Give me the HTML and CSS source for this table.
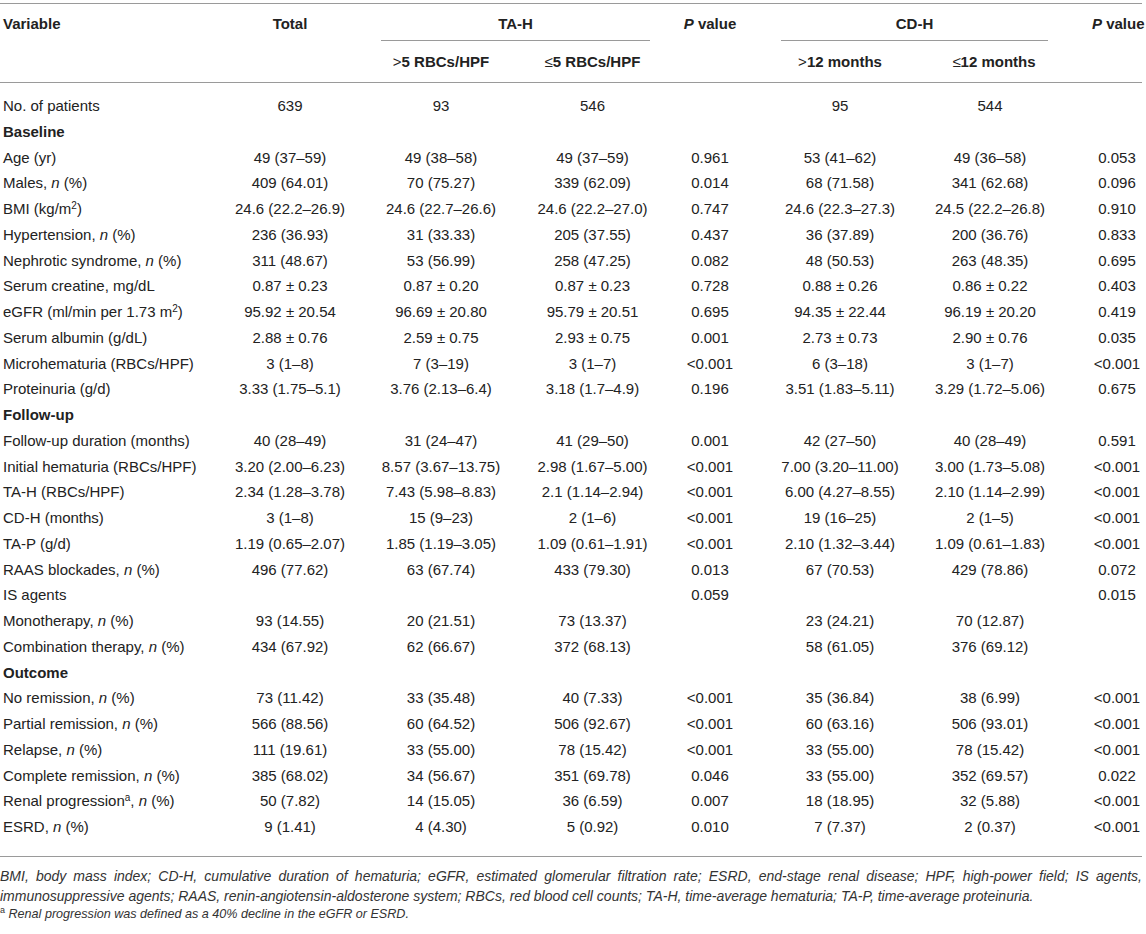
FILE: index.html
```html
<!DOCTYPE html>
<html lang="en">
<head>
    <meta charset="UTF-8">
    <meta name="viewport" content="width=device-width, initial-scale=1.0">
    <title>Patient characteristics by hematuria</title>
    <link rel="stylesheet" href="styles.css">
</head>
<body>
    <div class="page">
        <table class="data">
            <colgroup>
                <col class="c-var">
                <col class="c-total">
                <col class="c-ta1">
                <col class="c-ta2">
                <col class="c-p1">
                <col class="c-cd1">
                <col class="c-cd2">
                <col class="c-p2">
            </colgroup>
            <thead>
                <tr class="head-top">
                    <th rowspan="2" class="h-var">Variable</th>
                    <th rowspan="2">Total</th>
                    <th colspan="2" class="h-group"><div class="group ta">TA-H</div></th>
                    <th rowspan="2"><i>P</i> value</th>
                    <th colspan="2" class="h-group"><div class="group cd">CD-H</div></th>
                    <th rowspan="2" class="h-p2"><i>P</i> value</th>
                </tr>
                <tr class="head-sub">
                    <th><span class="op">&gt;</span>5 RBCs/HPF</th>
                    <th><span class="op">&le;</span>5 RBCs/HPF</th>
                    <th><span class="op">&gt;</span>12 months</th>
                    <th class="h-cd2"><span class="op">&le;</span>12 months</th>
                </tr>
            </thead>
            <tbody>
                <tr class="first">
                    <td>No. of patients</td><td>639</td><td>93</td><td>546</td><td></td><td>95</td><td>544</td><td></td>
                </tr>
                <tr class="section"><td colspan="8">Baseline</td></tr>
                <tr>
                    <td>Age (yr)</td><td>49 (37–59)</td><td>49 (38–58)</td><td>49 (37–59)</td><td>0.961</td><td>53 (41–62)</td><td>49 (36–58)</td><td>0.053</td>
                </tr>
                <tr>
                    <td>Males, <i>n</i> (%)</td><td>409 (64.01)</td><td>70 (75.27)</td><td>339 (62.09)</td><td>0.014</td><td>68 (71.58)</td><td>341 (62.68)</td><td>0.096</td>
                </tr>
                <tr>
                    <td>BMI (kg/m<sup>2</sup>)</td><td>24.6 (22.2–26.9)</td><td>24.6 (22.7–26.6)</td><td>24.6 (22.2–27.0)</td><td>0.747</td><td>24.6 (22.3–27.3)</td><td>24.5 (22.2–26.8)</td><td>0.910</td>
                </tr>
                <tr>
                    <td>Hypertension, <i>n</i> (%)</td><td>236 (36.93)</td><td>31 (33.33)</td><td>205 (37.55)</td><td>0.437</td><td>36 (37.89)</td><td>200 (36.76)</td><td>0.833</td>
                </tr>
                <tr>
                    <td>Nephrotic syndrome, <i>n</i> (%)</td><td>311 (48.67)</td><td>53 (56.99)</td><td>258 (47.25)</td><td>0.082</td><td>48 (50.53)</td><td>263 (48.35)</td><td>0.695</td>
                </tr>
                <tr>
                    <td>Serum creatine, mg/dL</td><td>0.87 ± 0.23</td><td>0.87 ± 0.20</td><td>0.87 ± 0.23</td><td>0.728</td><td>0.88 ± 0.26</td><td>0.86 ± 0.22</td><td>0.403</td>
                </tr>
                <tr>
                    <td>eGFR (ml/min per 1.73 m<sup>2</sup>)</td><td>95.92 ± 20.54</td><td>96.69 ± 20.80</td><td>95.79 ± 20.51</td><td>0.695</td><td>94.35 ± 22.44</td><td>96.19 ± 20.20</td><td>0.419</td>
                </tr>
                <tr>
                    <td>Serum albumin (g/dL)</td><td>2.88 ± 0.76</td><td>2.59 ± 0.75</td><td>2.93 ± 0.75</td><td>0.001</td><td>2.73 ± 0.73</td><td>2.90 ± 0.76</td><td>0.035</td>
                </tr>
                <tr>
                    <td>Microhematuria (RBCs/HPF)</td><td>3 (1–8)</td><td>7 (3–19)</td><td>3 (1–7)</td><td>&lt;0.001</td><td>6 (3–18)</td><td>3 (1–7)</td><td>&lt;0.001</td>
                </tr>
                <tr>
                    <td>Proteinuria (g/d)</td><td>3.33 (1.75–5.1)</td><td>3.76 (2.13–6.4)</td><td>3.18 (1.7–4.9)</td><td>0.196</td><td>3.51 (1.83–5.11)</td><td>3.29 (1.72–5.06)</td><td>0.675</td>
                </tr>
                <tr class="section"><td colspan="8">Follow-up</td></tr>
                <tr>
                    <td>Follow-up duration (months)</td><td>40 (28–49)</td><td>31 (24–47)</td><td>41 (29–50)</td><td>0.001</td><td>42 (27–50)</td><td>40 (28–49)</td><td>0.591</td>
                </tr>
                <tr>
                    <td>Initial hematuria (RBCs/HPF)</td><td>3.20 (2.00–6.23)</td><td>8.57 (3.67–13.75)</td><td>2.98 (1.67–5.00)</td><td>&lt;0.001</td><td>7.00 (3.20–11.00)</td><td>3.00 (1.73–5.08)</td><td>&lt;0.001</td>
                </tr>
                <tr>
                    <td>TA-H (RBCs/HPF)</td><td>2.34 (1.28–3.78)</td><td>7.43 (5.98–8.83)</td><td>2.1 (1.14–2.94)</td><td>&lt;0.001</td><td>6.00 (4.27–8.55)</td><td>2.10 (1.14–2.99)</td><td>&lt;0.001</td>
                </tr>
                <tr>
                    <td>CD-H (months)</td><td>3 (1–8)</td><td>15 (9–23)</td><td>2 (1–6)</td><td>&lt;0.001</td><td>19 (16–25)</td><td>2 (1–5)</td><td>&lt;0.001</td>
                </tr>
                <tr>
                    <td>TA-P (g/d)</td><td>1.19 (0.65–2.07)</td><td>1.85 (1.19–3.05)</td><td>1.09 (0.61–1.91)</td><td>&lt;0.001</td><td>2.10 (1.32–3.44)</td><td>1.09 (0.61–1.83)</td><td>&lt;0.001</td>
                </tr>
                <tr>
                    <td>RAAS blockades, <i>n</i> (%)</td><td>496 (77.62)</td><td>63 (67.74)</td><td>433 (79.30)</td><td>0.013</td><td>67 (70.53)</td><td>429 (78.86)</td><td>0.072</td>
                </tr>
                <tr>
                    <td>IS agents</td><td></td><td></td><td></td><td>0.059</td><td></td><td></td><td>0.015</td>
                </tr>
                <tr>
                    <td>Monotherapy, <i>n</i> (%)</td><td>93 (14.55)</td><td>20 (21.51)</td><td>73 (13.37)</td><td></td><td>23 (24.21)</td><td>70 (12.87)</td><td></td>
                </tr>
                <tr>
                    <td>Combination therapy, <i>n</i> (%)</td><td>434 (67.92)</td><td>62 (66.67)</td><td>372 (68.13)</td><td></td><td>58 (61.05)</td><td>376 (69.12)</td><td></td>
                </tr>
                <tr class="section"><td colspan="8">Outcome</td></tr>
                <tr>
                    <td>No remission, <i>n</i> (%)</td><td>73 (11.42)</td><td>33 (35.48)</td><td>40 (7.33)</td><td>&lt;0.001</td><td>35 (36.84)</td><td>38 (6.99)</td><td>&lt;0.001</td>
                </tr>
                <tr>
                    <td>Partial remission, <i>n</i> (%)</td><td>566 (88.56)</td><td>60 (64.52)</td><td>506 (92.67)</td><td>&lt;0.001</td><td>60 (63.16)</td><td>506 (93.01)</td><td>&lt;0.001</td>
                </tr>
                <tr>
                    <td>Relapse, <i>n</i> (%)</td><td>111 (19.61)</td><td>33 (55.00)</td><td>78 (15.42)</td><td>&lt;0.001</td><td>33 (55.00)</td><td>78 (15.42)</td><td>&lt;0.001</td>
                </tr>
                <tr>
                    <td>Complete remission, <i>n</i> (%)</td><td>385 (68.02)</td><td>34 (56.67)</td><td>351 (69.78)</td><td>0.046</td><td>33 (55.00)</td><td>352 (69.57)</td><td>0.022</td>
                </tr>
                <tr>
                    <td>Renal progression<sup>a</sup>, <i>n</i> (%)</td><td>50 (7.82)</td><td>14 (15.05)</td><td>36 (6.59)</td><td>0.007</td><td>18 (18.95)</td><td>32 (5.88)</td><td>&lt;0.001</td>
                </tr>
                <tr class="last">
                    <td>ESRD, <i>n</i> (%)</td><td>9 (1.41)</td><td>4 (4.30)</td><td>5 (0.92)</td><td>0.010</td><td>7 (7.37)</td><td>2 (0.37)</td><td>&lt;0.001</td>
                </tr>
            </tbody>
        </table>

        <div class="notes">
            <p class="note-full">BMI, body mass index; CD-H, cumulative duration of hematuria; eGFR, estimated glomerular filtration rate; ESRD, end-stage renal disease; HPF, high-power field; IS agents,</p>
            <p>immunosuppressive agents; RAAS, renin-angiotensin-aldosterone system; RBCs, red blood cell counts; TA-H, time-average hematuria; TA-P, time-average proteinuria.</p>
            <p class="note-sub"><sup>a</sup> Renal progression was defined as a 40% decline in the eGFR or ESRD.</p>
        </div>
    </div>
</body>
</html>
```

FILE: styles.css
```css
* {
    margin: 0;
    padding: 0;
    box-sizing: border-box;
}

html, body {
    background: #fff;
    color: #222;
    font-family: "Liberation Sans", Arial, sans-serif;
    font-size: 15px;
}

.page {
    width: 1142px;
    padding-top: 3px;
}

/* table */
.data {
    width: 1142px;
    table-layout: fixed;
    border-collapse: separate;
    border-spacing: 0;
    border-top: 1px solid #9a9a9a;
}

.c-var { width: 215px; }
.c-total { width: 150px; }
.c-ta1 { width: 152px; }
.c-ta2 { width: 151px; }
.c-p1 { width: 84px; }
.c-cd1 { width: 176px; }
.c-cd2 { width: 132px; }
.c-p2 { width: 82px; }

th, td {
    text-align: center;
    font-weight: normal;
    white-space: nowrap;
}

th {
    font-weight: bold;
    vertical-align: top;
}

.head-top th {
    padding-top: 11px;
    line-height: 18px;
    border-bottom: 1px solid #9a9a9a;
}

.head-top th.h-group {
    border-bottom: none;
}

.head-sub th {
    padding: 12px 0 11px;
    line-height: 18px;
    border-bottom: 1px solid #9a9a9a;
}

.h-var {
    text-align: left;
    padding-left: 3px;
}

.h-p2 { padding-left: 32px; }
.h-cd2 { padding-right: 8px; }

.group {
    padding-bottom: 7px;
    border-bottom: 1px solid #9a9a9a;
}

.group.ta { margin: 0 18px 0 16px; }
.group.cd { margin: 0 12px 0 29px; }

.op { font-weight: normal; }

td {
    padding: 4px 0;
    line-height: 17.75px;
}

td:first-child {
    text-align: left;
    padding-left: 3px;
}

td:nth-child(7) { padding-right: 8px; }
td:nth-child(8) { padding-left: 32px; }

.first td { padding-top: 14px; }
.last td { padding-bottom: 20px; }

.section td {
    font-weight: bold;
}

sup {
    font-size: 10px;
    line-height: 0;
    vertical-align: 5px;
}

/* footnotes */
.notes {
    border-top: 1px solid #9a9a9a;
    padding-top: 9px;
    font-size: 14px;
    font-style: italic;
    line-height: 20px;
    color: #333;
}

.notes p {
    text-align: left;
}

.notes .note-full {
    text-align: justify;
    text-align-last: justify;
}

.notes .note-sub {
    font-size: 12.6px;
    line-height: 17px;
}

.notes sup {
    font-size: 9px;
    font-style: normal;
}
```
